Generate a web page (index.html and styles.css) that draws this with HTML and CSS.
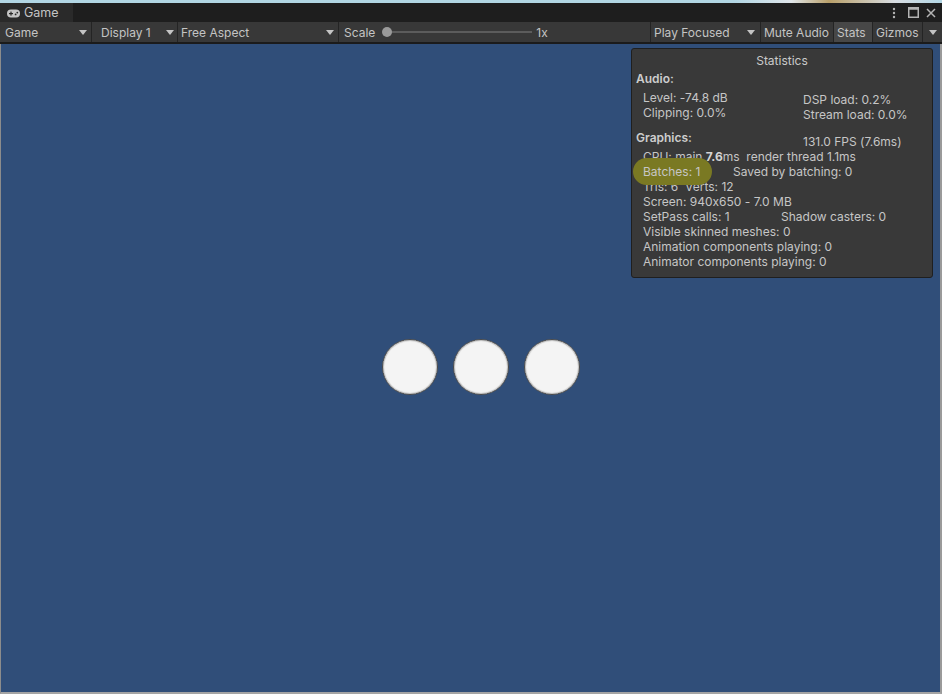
FILE: index.html
```html
<!DOCTYPE html>
<html>
<head>
<meta charset="utf-8">
<link rel="stylesheet" href="styles.css">
</head>
<body>
<div class="window">
  <div class="topstrip"></div>
  <div class="tabbar">
    <div class="tab">
      <svg class="pad" width="13" height="9" viewBox="0 0 13 9">
        <rect x="0" y="0.5" width="13" height="8" rx="4" fill="#c4c4c4"/>
        <rect x="2" y="4" width="4" height="1.2" fill="#282828"/>
        <rect x="3.4" y="2.6" width="1.2" height="4" fill="#282828"/>
        <circle cx="8.6" cy="5.4" r="0.9" fill="#282828"/>
        <circle cx="10.3" cy="3.6" r="0.9" fill="#282828"/>
      </svg>
      <span>Game</span>
    </div>
    <div class="spacer"></div>
    <div class="wincontrols">
      <svg width="4" height="12" viewBox="0 0 4 12"><circle cx="2" cy="2" r="1.2" fill="#b4b4b4"/><circle cx="2" cy="6" r="1.2" fill="#b4b4b4"/><circle cx="2" cy="10" r="1.2" fill="#b4b4b4"/></svg>
      <svg width="11" height="11" viewBox="0 0 11 11"><rect x="0.75" y="0.75" width="9.5" height="9.5" fill="none" stroke="#b4b4b4" stroke-width="1.5"/><rect x="0.75" y="0.75" width="9.5" height="2" fill="#b4b4b4"/></svg>
      <svg width="10" height="10" viewBox="0 0 10 10"><path d="M1 1 L9 9 M9 1 L1 9" stroke="#b4b4b4" stroke-width="1.5"/></svg>
    </div>
  </div>
  <div class="toolbar">
    <div class="tb w-game"><span>Game</span><i class="caret"></i></div>
    <div class="tb w-display"><span>Display 1</span><i class="caret"></i></div>
    <div class="tb w-aspect"><span>Free Aspect</span><i class="caret"></i></div>
    <div class="tb w-scale">
      <span>Scale</span>
      <div class="slider"><div class="knob"></div><div class="track"></div></div>
      <span class="scaleval">1x</span>
    </div>
    <div class="tb w-play"><span>Play Focused</span><i class="caret"></i></div>
    <div class="tb w-mute"><span>Mute Audio</span></div>
    <div class="tb w-stats active"><span>Stats</span></div>
    <div class="tb w-gizmos"><span>Gizmos</span></div>
    <div class="tb w-arrow"><i class="caret"></i></div>
  </div>
  <div class="view">
    <div class="balls">
      <div class="ball"></div>
      <div class="ball"></div>
      <div class="ball"></div>
    </div>
    <div class="stats">
      <div class="title">Statistics</div>
      <div class="head">Audio:</div>
      <div class="audio">
        <div class="col">
          <div>Level: -74.8 dB</div>
          <div>Clipping: 0.0%</div>
        </div>
        <div class="col right">
          <div>DSP load: 0.2%</div>
          <div>Stream load: 0.0%</div>
        </div>
      </div>
      <div class="ghead">
        <span class="head">Graphics:</span>
        <span class="fps">131.0 FPS (7.6ms)</span>
      </div>
      <div class="glines">
        <div>CPU: main <b>7.6</b>ms&nbsp; render thread 1.1ms</div>
        <div><span class="c90"><span class="hl">Batches: 1</span></span>Saved by batching: 0</div>
        <div>Tris: 6&nbsp; Verts: 12</div>
        <div>Screen: 940x650 - 7.0 MB</div>
        <div><span class="c138">SetPass calls: 1</span>Shadow casters: 0</div>
        <div>Visible skinned meshes: 0</div>
        <div>Animation components playing: 0</div>
        <div>Animator components playing: 0</div>
      </div>
    </div>
  </div>
</div>
</body>
</html>
```

FILE: styles.css
```css
* { box-sizing: border-box; }
html, body { margin: 0; padding: 0; }
body {
  width: 942px;
  height: 694px;
  overflow: hidden;
  background: #a4a4a4;
  font-family: Inter, "Noto Sans", sans-serif;
  font-size: 12px;
  font-feature-settings: "calt" 0;
  color: #c4c4c4;
}
.window {
  display: flex;
  flex-direction: column;
  height: 694px;
}
.topstrip {
  height: 3px;
  background: linear-gradient(90deg, #b2d6e4 0, #b2d6e4 78%, #e0e6ea 84%, #b9a06a 88%, #d8dde2 95%, #b2d6e4 100%);
}
.tabbar {
  height: 19px;
  background: #1e1e1e;
  display: flex;
  align-items: stretch;
}
.tab {
  width: 73px;
  background: #2a2a2a;
  display: flex;
  align-items: center;
  gap: 4px;
  padding-left: 7px;
  font-size: 12.5px;
  color: #c4c4c4;
}
.tab .pad { margin-top: 1px; }
.spacer { flex: 1; }
.wincontrols {
  display: flex;
  align-items: center;
  gap: 7px;
  padding-right: 6px;
}
.wincontrols svg:first-child { margin-right: 5px; }
.toolbar {
  height: 22px;
  background: #383838;
  border-bottom: 2px solid #1b1b1b;
  display: flex;
}
.tb {
  height: 20px;
  display: flex;
  align-items: center;
  border-left: 1px solid #242424;
  position: relative;
  white-space: nowrap;
}
.tb:first-child { border-left: none; }
.caret {
  position: absolute;
  top: 8px;
  width: 0; height: 0;
  border-left: 4px solid transparent;
  border-right: 4px solid transparent;
  border-top: 5px solid #c4c4c4;
}
.w-game { width: 91px; padding-left: 5px; }
.w-game .caret { left: 79px; }
.w-display { width: 86px; padding-left: 9px; }
.w-display .caret { left: 74px; }
.w-aspect { width: 161px; padding-left: 3px; }
.w-aspect .caret { left: 148px; }
.w-scale { width: 312px; padding-left: 5px; }
.slider {
  position: relative;
  width: 150px;
  height: 10px;
  margin-left: 7px;
}
.track {
  position: absolute;
  left: 4px; right: 0;
  top: 4px;
  height: 2px;
  background: #5c5c5c;
}
.knob {
  position: absolute;
  left: 0; top: 0;
  width: 10px; height: 10px;
  border-radius: 50%;
  background: #9a9a9a;
  z-index: 1;
}
.scaleval { margin-left: 4px; }
.w-play { width: 110px; padding-left: 3px; }
.w-play .caret { left: 96px; }
.w-mute { width: 73px; padding-left: 3px; }
.w-stats { width: 39px; padding-left: 3px; }
.w-stats.active { background: #474747; }
.w-gizmos { width: 50px; padding-left: 3px; }
.w-arrow { width: 20px; }
.w-arrow .caret { left: 6px; }

.view {
  flex: 1;
  position: relative;
  background: #304e79;
  border-left: 1px solid #8c8c8c;
  border-right: 2px solid #9a9a9a;
  border-bottom: 2px solid #a4a4a4;
  display: flex;
  align-items: center;
  justify-content: center;
}
.balls {
  display: flex;
  gap: 15px;
  margin-left: 21px;
  margin-top: -3px;
}
.ball {
  width: 56px;
  height: 56px;
  border-radius: 50%;
  background: #f4f4f4;
  border: 1px solid #4a4a4a;
  box-shadow: inset 0 0 1px 1px #c0c0c0;
}
.stats {
  position: absolute;
  left: 630px;
  top: 4px;
  width: 302px;
  height: 230px;
  background: #393939;
  border: 1px solid #1f1f1f;
  border-radius: 3px;
  padding: 4px 4px 0 4px;
  line-height: 15px;
  color: #c6c6c6;
}
.title { text-align: center; color: #cacaca; margin-bottom: 3px; }
.head { font-weight: 600; color: #cdcdcd; }
.audio {
  display: flex;
  margin-top: 4px;
  padding-left: 7px;
}
.audio .col { width: 160px; flex-shrink: 0; }
.audio .col.right { padding-top: 2px; flex: 1; }
.ghead {
  display: flex;
  margin-top: 8px;
}
.ghead .head { width: 167px; flex-shrink: 0; }
.ghead .fps { padding-top: 4px; }
.glines { padding-left: 7px; margin-top: 0; }
.glines b { font-weight: 700; color: #d4d4d4; }
.c90 { display: inline-block; width: 90px; }
.c138 { display: inline-block; width: 138px; }
.hl {
  display: inline-block;
  background: #7a7923;
  border-radius: 14px;
  padding: 6px 12px 6px 10px;
  margin: -6px -12px -6px -10px;
  position: relative;
}
```
